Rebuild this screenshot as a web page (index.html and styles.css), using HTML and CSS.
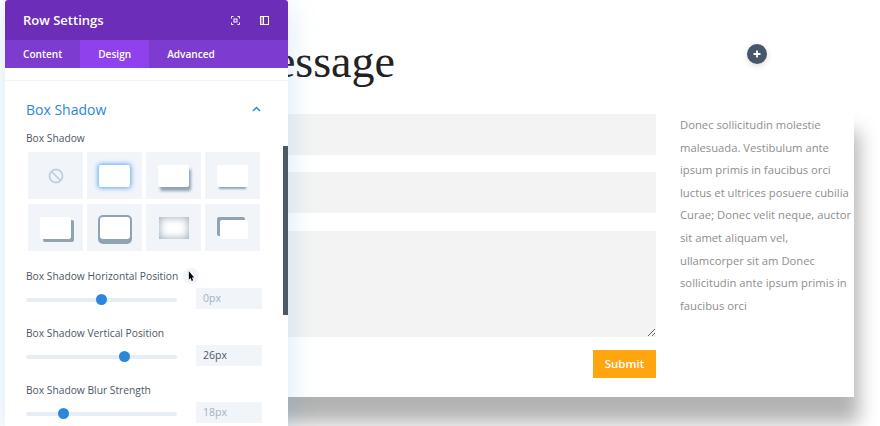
FILE: index.html
```html
<!DOCTYPE html>
<html lang="en">
<head>
    <meta charset="UTF-8">
    <meta name="viewport" content="width=device-width, initial-scale=1.0">
    <title>Row Settings</title>
    <link rel="stylesheet" href="styles.css">
</head>
<body>
    <!-- Page behind the modal -->
    <div class="page">
        <h1 class="page-title">Message</h1>
        <div class="row">
            <form class="contact-form">
                <input class="field" type="text">
                <input class="field" type="text">
                <textarea class="field field-message"></textarea>
                <button class="submit-button" type="button">Submit</button>
            </form>
            <p class="side-text">Donec sollicitudin molestie malesuada. Vestibulum ante ipsum primis in faucibus orci luctus et ultrices posuere cubilia Curae; Donec velit neque, auctor sit amet aliquam vel, ullamcorper sit am Donec sollicitudin ante ipsum primis in faucibus orci</p>
        </div>
    </div>

    <div class="add-button">
        <svg width="8" height="8" viewBox="0 0 8 8"><path d="M4 .5v7M.5 4h7" stroke="#fff" stroke-width="1.8"/></svg>
    </div>

    <!-- Settings modal -->
    <div class="modal">
        <div class="modal-header">
            <span class="modal-title">Row Settings</span>
            <span class="modal-icons">
                <svg width="9" height="9" viewBox="0 0 9 9" fill="none" stroke="#fff" stroke-width="1"><path d="M.5 2.500v-2h2M6.500 .5h2v2M8.500 6.500v2h-2M2.500 8.500h-2v-2"/><rect x="3" y="3" width="3" height="3"/></svg>
                <svg width="9" height="9" viewBox="0 0 9 9" fill="none" stroke="#fff" stroke-width="1"><rect x=".5" y=".5" width="8" height="8"/><path d="M3.500 .5v8"/><rect x="1" y="1" width="2" height="7" fill="#fff" fill-opacity=".35" stroke="none"/></svg>
            </span>
        </div>
        <div class="modal-tabs">
            <span class="tab">Content</span>
            <span class="tab tab-active">Design</span>
            <span class="tab">Advanced</span>
        </div>
        <div class="modal-body">
            <div class="scrollbar"></div>
            <div class="section-head">
                <span>Box Shadow</span>
                <svg width="9" height="6" viewBox="0 0 9 6" fill="none" stroke="#2b87da" stroke-width="1.500"><path d="M1 5l3.500-3.500L8 5"/></svg>
            </div>
            <div class="option-label">Box Shadow</div>
            <div class="presets">
                <div class="preset">
                    <svg width="16" height="16" viewBox="0 0 16 16" fill="none" stroke="#c5d0de" stroke-width="2"><circle cx="8" cy="8" r="6.500"/><path d="M3.400 3.400l9.200 9.200"/></svg>
                </div>
                <div class="preset"><div class="box box-glow"></div></div>
                <div class="preset"><div class="box box-corner"></div></div>
                <div class="preset"><div class="box box-under"></div></div>
                <div class="preset"><div class="box box-hard"></div></div>
                <div class="preset"><div class="box box-ring"></div></div>
                <div class="preset"><div class="box box-inset"></div></div>
                <div class="preset"><div class="box box-topleft"></div></div>
            </div>

            <div class="option-label option-label-slider option-label-first">Box Shadow Horizontal Position
                <span class="cursor-dot">
                    <svg width="7" height="11" viewBox="0 0 8 12"><path d="M1 0v9.500l2-1.800 1.300 3.300 1.500-.6-1.300-3.200H7z" fill="#000"/></svg>
                </span>
            </div>
            <div class="slider-row">
                <div class="slider"><span class="thumb thumb-h"></span></div>
                <div class="value value-muted">0px</div>
            </div>

            <div class="option-label option-label-slider">Box Shadow Vertical Position</div>
            <div class="slider-row">
                <div class="slider"><span class="thumb thumb-v"></span></div>
                <div class="value">26px</div>
            </div>

            <div class="option-label option-label-slider">Box Shadow Blur Strength</div>
            <div class="slider-row">
                <div class="slider"><span class="thumb thumb-b"></span></div>
                <div class="value value-muted">18px</div>
            </div>
        </div>
    </div>
</body>
</html>
```

FILE: styles.css
```css
/* Base */
html, body {
    height: 100%;
}

body {
    margin: 0;
    overflow: hidden;
    background: #fff;
    font-family: 'Open Sans', sans-serif;
}

/* Page behind the modal */
.page {
    height: 426px;
    overflow: hidden;
    box-sizing: border-box;
    padding-top: 36px;
}

.page-title {
    margin: 0 0 0 234px;
    font-family: 'Liberation Serif', serif;
    font-size: 46px;
    font-weight: 400;
    line-height: 52px;
    color: #222;
}

.row {
    display: flex;
    box-sizing: border-box;
    width: 794px;
    height: 292px;
    margin: 17px 0 0 60px;
    padding: 9px 0 0 0;
    background: #fff;
    box-shadow: 5px 26px 18px 0 rgba(0, 0, 0, 0.3);
}

.contact-form {
    display: flex;
    flex: none;
    flex-direction: column;
    width: 596px;
}

.field {
    display: block;
    box-sizing: border-box;
    width: 100%;
    height: 41px;
    margin: 0 0 17.400px;
    padding: 0;
    border: none;
    background: #f3f3f3;
}

.field-message {
    height: 106px;
    margin-bottom: 13px;
    resize: vertical;
}

.submit-button {
    align-self: flex-end;
    width: 63px;
    height: 28px;
    padding: 0;
    border: none;
    background: #ffa50f;
    color: #fff;
    font-family: 'Open Sans', sans-serif;
    font-size: 11.500px;
    font-weight: 600;
}

.side-text {
    flex: none;
    width: 174px;
    margin: 0 0 0 24px;
    font-size: 11.250px;
    line-height: 22.600px;
    color: #8e8e8e;
}

.add-button {
    position: absolute;
    left: 747px;
    top: 44px;
    display: flex;
    align-items: center;
    justify-content: center;
    width: 20px;
    height: 20px;
    border-radius: 50%;
    background: #46566b;
    box-shadow: 0 2px 6px rgba(0, 0, 0, 0.15);
}

/* Settings modal */
.modal {
    position: absolute;
    left: 5px;
    top: 0;
    width: 283px;
    height: 426px;
    overflow: hidden;
    background: #fff;
    border-radius: 3px 3px 0 0;
    box-shadow: 0 5px 30px rgba(43, 135, 218, 0.2);
}

.modal-header {
    display: flex;
    align-items: center;
    justify-content: space-between;
    box-sizing: border-box;
    height: 40px;
    padding: 0 19px 0 18px;
    background: #6c2eb9;
    color: #fff;
}

.modal-title {
    font-size: 13px;
    font-weight: 600;
}

.modal-icons {
    display: flex;
    gap: 20px;
}

.modal-tabs {
    display: flex;
    height: 28px;
    background: #7d3bcf;
}

.tab {
    display: flex;
    align-items: center;
    padding: 0 18px;
    color: #fff;
    font-size: 10.100px;
    font-weight: 600;
}

.tab-active {
    background: #8f42ec;
}

.modal-body {
    position: relative;
    margin-top: 12px;
    padding: 0 26px 0 21px;
    border-top: 1px solid #f1f5f9;
}

.scrollbar {
    position: absolute;
    right: 0;
    top: 65px;
    width: 5px;
    height: 169px;
    background: #4c5866;
}

.section-head {
    display: flex;
    align-items: center;
    justify-content: space-between;
    height: 20px;
    padding: 18px 0 0;
    color: #2b87da;
    font-size: 14px;
}

.section-head svg {
    margin-right: 1px;
}

.option-label {
    margin-top: 10px;
    color: #4c5866;
    font-size: 10.250px;
    font-weight: 500;
    line-height: 18px;
}

.presets {
    display: grid;
    grid-template-columns: repeat(4, 55px);
    grid-auto-rows: 47px;
    gap: 5px 4px;
    margin: 5px 0 0 2px;
}

.preset {
    display: flex;
    align-items: center;
    justify-content: center;
    background: #f1f5f9;
}

.box {
    width: 31px;
    height: 22px;
    border-radius: 2px;
    background: #fff;
}

.box-glow {
    box-shadow: 0 0 5px 1px #5aa5f5;
}

.box-corner {
    box-shadow: 2px 4px 3px #8fa3b3;
}

.box-under {
    box-shadow: 0 4px 2px -2px #8fa3b3;
}

.box-hard {
    box-shadow: 3px 3px 0 #8fa3b3;
}

.box-ring {
    width: 30px;
    height: 22px;
    border-radius: 3px;
    box-shadow: 0 0 0 2px #8fa3b3, 0 3px 0 2px #8fa3b3;
}

.box-inset {
    width: 30px;
    height: 22px;
    border-radius: 0;
    box-shadow: inset 0 0 8px #8fa3b3;
}

.box-topleft {
    width: 28px;
    height: 19px;
    margin: 3px 0 0 3px;
    box-shadow: -3px -3px 0 #8fa3b3;
}

.option-label-slider {
    display: flex;
    align-items: center;
    gap: 5px;
    height: 18px;
    margin-top: 15px;
}

.option-label-first {
    margin-top: 16px;
}

.cursor-dot {
    display: flex;
    align-items: center;
    justify-content: center;
    width: 16px;
    height: 16px;
    border-radius: 50%;
    background: #f1f5f9;
}

.slider-row {
    display: flex;
    align-items: center;
    justify-content: space-between;
    height: 21px;
    margin-top: 3px;
}

.slider {
    position: relative;
    top: 1px;
    width: 151px;
    height: 4px;
    border-radius: 2px;
    background: #e6edf5;
}

.thumb {
    position: absolute;
    top: -4px;
    width: 11px;
    height: 11px;
    margin-left: -5.500px;
    border-radius: 50%;
    background: #2b87da;
}

.thumb-h {
    left: 75px;
}

.thumb-v {
    left: 98px;
}

.thumb-b {
    left: 37px;
}

.value {
    box-sizing: border-box;
    width: 66px;
    height: 21px;
    padding-left: 7px;
    background: #f1f5f9;
    color: #4c5866;
    font-size: 10.500px;
    line-height: 21px;
}

.value-muted {
    color: #a3b0c2;
}
```
